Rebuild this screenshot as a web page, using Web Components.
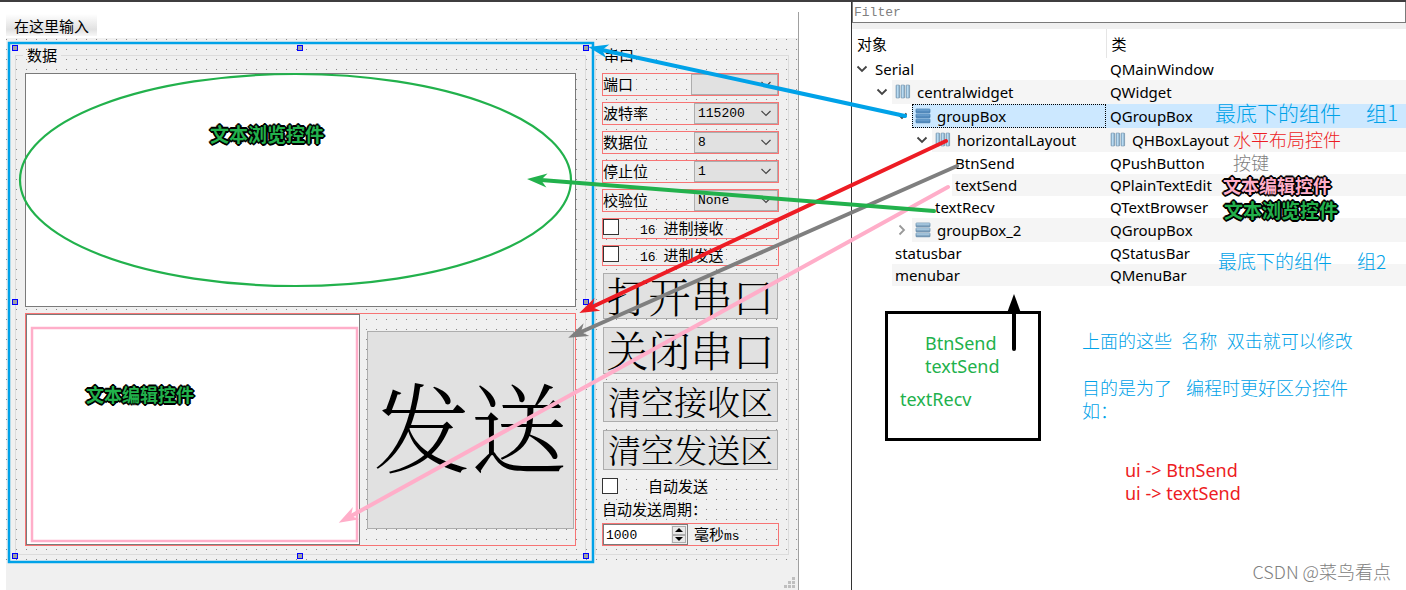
<!DOCTYPE html>
<html lang="zh-CN">
<head>
<meta charset="utf-8">
<title>Serial - Designer</title>
<style>
html, body { margin: 0; }
body { font-family: "Noto Sans", "Noto Sans CJK SC", sans-serif; color: #000; background: #fff; }
</style>
</head>
<body>
<designer-app></designer-app>

<script>
const define = (name, html, setup) => customElements.define(name, class extends HTMLElement {
  constructor() {
    super();
    const t = document.createElement('template');
    t.innerHTML = html;
    this.attachShadow({ mode: 'open' }).append(t.content.cloneNode(true));
  }
  connectedCallback() { if (setup) setup(this, this.shadowRoot); }
});

/* Titled group box */
define('group-panel', `
<style>
:host { display: block; min-width: 0; }
fieldset { box-sizing: border-box; height: 100%; min-width: 0; margin: 0; border: 1px solid #dcdcdc; padding: 10px 9px 8px var(--inset, 9px); }
legend { margin-left: var(--legend-shift, -2px); padding: 0 4px 2px var(--legend-pad, 4px); font-size: 15px; line-height: 13px; }
</style>
<fieldset><legend></legend><slot></slot></fieldset>`,
(el, root) => { root.querySelector('legend').textContent = el.getAttribute('label'); });

/* Label and drop-down in one row */
define('combo-row', `
<style>
:host { display: flex; box-sizing: border-box; height: 23px; border: 1px solid #f77474; font-size: 15px; line-height: 19px; }
label { flex: 1; }
.box { position: relative; width: var(--combo, 84px); }
select { appearance: none; box-sizing: border-box; width: 100%; height: 21px; margin: 0; padding: 1px 0 0 3px; border: 1px solid #adadad; border-radius: 0; background: #e1e1e1; color: #000; font: 13px/18px "Liberation Mono", monospace; display: block; }
svg { position: absolute; right: 7px; top: 7px; pointer-events: none; }
</style>
<label for="s"></label>
<div class="box"><select id="s"><option></option></select>
<svg width="10" height="7" viewBox="0 0 10 7"><path d="M.5 1 5 5.500 9.500 1" fill="none" stroke="#444" stroke-width="1.200"/></svg></div>`,
(el, root) => {
  root.querySelector('label').textContent = el.getAttribute('label');
  root.querySelector('option').textContent = el.getAttribute('value') || '';
});

/* Tick box and caption */
define('check-row', `
<style>
:host { display: flex; box-sizing: border-box; height: 21px; border: 1px solid #f77474; font-size: 15px; line-height: 17px; }
:host([plain]) { border: 0; height: 16px; line-height: 16px; }
input { appearance: none; box-sizing: border-box; flex: none; width: 16px; height: 16px; margin: 0; border: 1px solid #333; background: #fff; }
label { margin-left: var(--gap, 21px); white-space: pre; }
b { font: 13px/13px "Liberation Mono", monospace; }
</style>
<input type="checkbox" id="c"><label for="c"><b></b><span></span></label>`,
(el, root) => {
  root.querySelector('b').textContent = el.getAttribute('prefix') || '';
  root.querySelector('span').textContent = el.getAttribute('label');
});

/* Push button */
define('push-button', `
<style>
:host { display: flex; }
button { flex: 1; box-sizing: border-box; margin: 0; padding: 0 0 var(--lift, 3px); border: 1px solid #adadad; border-radius: 0; background: #e1e1e1; color: #000; overflow: hidden; white-space: nowrap; font: 300 var(--size, 42px)/1 "Noto Serif CJK SC", "Noto Sans CJK SC", serif; }
</style>
<button type="button"><slot></slot></button>`);

/* Number box with steppers and a unit */
define('spin-row', `
<style>
:host { display: flex; box-sizing: border-box; height: 23px; border: 1px solid #f77474; font-size: 15px; line-height: 20px; }
.box { display: flex; box-sizing: border-box; width: 85px; border: 1px solid #7a7a7a; background: #fff; }
input { flex: 1; min-width: 0; margin: 0; padding: 1px 0 0 2px; border: 0; background: none; font: 13px "Liberation Mono", monospace; }
.steps { display: flex; flex-direction: column; padding: 1px; background: #f0f0f0; }
button { display: flex; align-items: center; justify-content: center; flex: 1; box-sizing: border-box; width: 14px; margin: 0; padding: 0; border: 1px solid #adadad; background: #e8e8e8; }
label { margin-left: 6px; }
b { font: 13px/13px "Liberation Mono", monospace; }
</style>
<div class="box"><input id="n" type="text" inputmode="numeric" value="1000">
<div class="steps"><button type="button" aria-label="+"><svg width="8" height="4"><path d="M0 4 4 0 8 4z"/></svg></button><button type="button" aria-label="-"><svg width="8" height="4"><path d="M0 0 4 4 8 0z"/></svg></button></div></div>
<label for="n">毫秒<b>ms</b></label>`);

/* The form being edited */
define('form-window', `
<style>
:host { display: flex; flex-direction: column; min-width: 0; }
.frame { flex: 1; display: flex; flex-direction: column; margin: 10px 52px 0 6px; border-right: 1px solid #a0a0a0; }
.menu { height: 26px; padding-top: 2px; box-sizing: border-box; display: flex; }
.menu a { height: 22px; padding: 0 8px; background: linear-gradient(#fff, #e1e1e1 70%, #f7f7f7); color: #000; text-decoration: none; font: 15px/24px "Noto Sans CJK SC", sans-serif; }
.canvas { flex: none; display: grid; grid-template-columns: 571fr 194fr; gap: 9px; padding: 10px 9px 6px; color: #000;
  background-color: #f0f0f0; background-position: 0 1px;
  background-image: linear-gradient(to right, transparent 1px, #f0f0f0 1px), linear-gradient(#888 1px, transparent 1px); background-size: 10px 10px; font-family: "Noto Sans CJK SC", sans-serif; }
.status { flex: 1; min-height: 27px; background: #f0f0f0; display: flex; align-items: flex-end; justify-content: flex-end; padding: 0 3px 2px; box-sizing: border-box; }
.col { display: flex; flex-direction: column; gap: 6px; }
textarea { display: block; box-sizing: border-box; width: 100%; margin: 0; border: 1px solid #7a7a7a; border-radius: 0; resize: none; background: #fff; }
.recv { height: 234px; }
.row { display: flex; align-items: center; gap: 7px; box-sizing: border-box; height: 233px; padding-right: 1px; border: 1px solid #f77474; }
.row textarea { flex: 333; width: 0; padding: 0; height: 231px; }
.row push-button { flex: 208; min-width: 0; width: 0; height: 198px; --size: 97px; --lift: 12px; }
.buttons { display: flex; flex-direction: column; gap: 8px; padding: 1px 1px 2px; }
.big { height: 46px; }
.big + .big { height: 47px; }
.mid { height: 40px; --size: 33px; }
.wide { --combo: 87px; }
.side { --inset: 6px; --legend-shift: 0px; --legend-pad: 2px; }
.cap { font-size: 15px; line-height: 17px; }
check-row[plain] { --gap: 30px; }
</style>
<div class="frame">
  <div class="menu"><a href="#">在这里输入</a></div>
  <div class="canvas">
    <group-panel label="数据"><div class="col">
      <textarea class="recv" readonly aria-label="textRecv"></textarea>
      <div class="row"><textarea aria-label="textSend"></textarea><push-button>发送</push-button></div>
    </div></group-panel>
    <group-panel class="side" label="串口"><div class="col">
      <combo-row class="wide" label="端口"></combo-row>
      <combo-row label="波特率" value="115200"></combo-row>
      <combo-row label="数据位" value="8"></combo-row>
      <combo-row label="停止位" value="1"></combo-row>
      <combo-row label="校验位" value="None"></combo-row>
      <check-row prefix="16 " label="进制接收"></check-row>
      <check-row prefix="16 " label="进制发送"></check-row>
      <div class="buttons">
        <push-button class="big">打开串口</push-button>
        <push-button class="big">关闭串口</push-button>
        <push-button class="mid">清空接收区</push-button>
        <push-button class="mid">清空发送区</push-button>
      </div>
      <check-row plain label="自动发送"></check-row>
      <div class="cap">自动发送周期：</div>
      <spin-row></spin-row>
    </div></group-panel>
  </div>
  <div class="status"><svg width="11" height="11" fill="#bfbfbf"><path d="M8 0h3v3h-3zM4 4h3v3h-3zM8 4h3v3h-3zM0 8h3v3h-3zM4 8h3v3h-3zM8 8h3v3h-3z"/></svg></div>
</div>`);

/* Object tree: name and class of every widget */
const bars = `<svg class="icon" width="16" height="16" viewBox="0 0 16 16"><defs><linearGradient id="g"><stop stop-color="#7fa6c4"/><stop offset=".5" stop-color="#c5e6fb"/><stop offset="1" stop-color="#5f87a8"/></linearGradient></defs><g fill="url(#g)" stroke="#7593ab" stroke-width=".6"><rect x="1" y="1" width="3.600" height="13" rx=".6"/><rect x="6" y="1" width="3.600" height="13" rx=".6"/><rect x="11" y="1" width="3.600" height="13" rx=".6"/></g></svg>`;
const stack = (id, hi, lo) => `<svg class="icon" width="16" height="16" viewBox="0 0 16 16"><defs><linearGradient id="${id}" x2="0" y2="1"><stop stop-color="${hi}"/><stop offset="1" stop-color="${lo}"/></linearGradient></defs><g fill="url(#${id})" stroke="${lo}" stroke-width=".7"><rect x="1" y="1" width="14" height="3.800" rx=".6"/><rect x="1" y="6" width="14" height="3.800" rx=".6"/><rect x="1" y="11" width="14" height="3.800" rx=".6"/></g></svg>`;
const down = `<svg width="12" height="8" viewBox="0 0 12 8"><path d="M1.500 1.500 6 6 10.500 1.500" fill="none" stroke="#444" stroke-width="1.800"/></svg>`;
const right = `<svg width="8" height="12" viewBox="0 0 8 12"><path d="M1.500 1.500 6 6 1.500 10.500" fill="none" stroke="#999" stroke-width="1.800"/></svg>`;
const objects = [
  [0, down, '', 'Serial', 'QMainWindow'],
  [1, down, bars, 'centralwidget', 'QWidget'],
  [2, down, stack('s1', '#7fb2de', '#3e78ae'), 'groupBox', 'QGroupBox', 'sel'],
  [3, down, bars, 'horizontalLayout', 'QHBoxLayout'],
  [4, '', '', 'BtnSend', 'QPushButton'],
  [4, '', '', 'textSend', 'QPlainTextEdit'],
  [3, '', '', 'textRecv', 'QTextBrowser'],
  [2, right, stack('s2', '#cfeafc', '#5f87a8'), 'groupBox_2', 'QGroupBox'],
  [1, '', '', 'statusbar', 'QStatusBar'],
  [1, '', '', 'menubar', 'QMenuBar']
];
define('object-tree', `
<style>
:host { display: block; font-size: 15px; }
table { width: 100%; table-layout: fixed; border-collapse: collapse; }
th { height: 29px; padding: 2px 5px 0; box-sizing: border-box; text-align: left; font-weight: 400; line-height: 27px; }
th:first-child { width: 254px; border-right: 1px solid #e5e5e5; }
td { padding: 0; height: 22px; line-height: 22px; white-space: nowrap; }
.tall td { height: 24px; line-height: 24px; }
td > div { display: flex; height: 100%; }
.toggle { flex: none; width: 20px; display: flex; align-items: center; justify-content: center; }
.name, .type { flex: 1; display: flex; align-items: center; gap: 6px; padding-left: 3px; box-sizing: border-box; height: 22px; }
.tall .name, .tall .type { height: 24px; }
.type { padding-left: 4px; }
.icon { flex: none; }
tr:nth-child(even) .name, tr:nth-child(even) .type { background: #f5f5f5; }
tr.sel .name, tr.sel .type { background: #cce8ff; }
tr.sel .name { outline: 1px dotted #000; outline-offset: -1px; }
</style>
<table><thead><tr><th scope="col">对象</th><th scope="col">类</th></tr></thead><tbody></tbody></table>`,
(el, root) => {
  root.querySelector('tbody').innerHTML = objects.map(([depth, toggle, icon, name, type, cls]) =>
    `<tr class="${cls || ''} ${icon ? 'tall' : ''}"><td><div style="padding-left:${depth * 20}px"><span class="toggle">${toggle}</span><span class="name">${icon}<span>${name}</span></span></div></td><td><div class="type">${name === 'horizontalLayout' ? icon : ''}<span>${type}</span></div></td></tr>`).join('');
});

/* Inspector column with the explanatory notes below the tree */
define('object-inspector', `
<style>
:host { display: flex; flex-direction: column; min-width: 0; border-left: 1px solid #333; }
input { box-sizing: border-box; width: 100%; height: 21px; margin: 0; padding: 1px 1px 0; border: 1px solid #7a7a7a; border-top: 0; border-radius: 0; background: #fff; font: 13px "Liberation Mono", monospace; }
input::placeholder { color: #808080; opacity: 1; }
.strip { height: 6px; background: #f0f0f0; }
.notes { display: flex; gap: 41px; padding: 25px 16px 0 33px; font-size: 18px; line-height: 23px; }
.box { flex: none; box-sizing: border-box; width: 156px; height: 130px; border: 3px solid #000; padding: 18px 0 0 12px; color: #22b14c; }
.box p { margin: 0 0 10px 25px; }
.box p + p { margin: 0; }
p { margin: 0; }
.blue { color: #00a2e8; padding-top: 19px; white-space: pre; font-weight: 300; }
.blue p + p { margin-top: 24px; }
.red { color: #ed1c24; margin: 36px 0 0 43px; }
</style>
<input type="text" placeholder="Filter" aria-label="Filter">
<div class="strip"></div>
<object-tree></object-tree>
<div class="notes">
  <div class="box"><p>BtnSend<br>textSend</p><p>textRecv</p></div>
  <div><div class="blue"><p>上面的这些  名称  双击就可以修改</p><p>目的是为了   编程时更好区分控件<br>如：</p></div>
  <div class="red">ui -&gt; BtnSend<br>ui -&gt; textSend</div></div>
</div>`);

/* Hand-drawn marks lying over the whole window */
const handles = [[15,48],[300,48],[586,48],[15,302],[586,302],[15,556],[300,556],[586,556]];
const barbed = 'M0 0 20 7 0 14 6 7z', solid = 'M0 0 19 7 0 14z';
const arrows = [['#00a2e8',905,116,602,50,barbed],['#ed1c24',946,141,592,307,barbed],['#7f7f7f',957,166,581,332,barbed],['#ffaec9',948,187,351,516,barbed],['#22b14c',934,211,541,180,barbed],['#000',1014,349,1014,307,solid]];
define('mark-layer', `
<style>
:host { position: absolute; inset: 0; pointer-events: none; overflow: hidden; font-weight: 300; }
svg { position: absolute; left: 0; top: 0; width: 100%; height: 590px; }
.note { position: absolute; display: flex; gap: 25px; white-space: nowrap; font-size: 18px; line-height: 24px; font-family: "Noto Sans CJK SC", sans-serif; }
.m { font-size: 19px; } .l { font-size: 21px; }
.blue { color: #00a2e8; } .red { color: #ed1c24; } .grey { color: #7f7f7f; }
.green { color: #22b14c; } .pink { color: #ffaec9; }
.out { font-weight: 700; text-shadow: 2px 0 #000, -2px 0 #000, 0 2px #000, 0 -2px #000, 1px 1px #000, -1px 1px #000, 1px -1px #000, -1px -1px #000; }
.mark { position: absolute; right: 15px; bottom: 6px; font: 300 18px/26px "Noto Sans CJK SC", sans-serif; color: #808080; }
</style>
<svg viewBox="0 0 1406 590" preserveAspectRatio="none">
  <g fill="#a0a0a4" stroke="#00f">${handles.map(([x, y]) => `<rect x="${x - 2.5}" y="${y - 2.5}" width="5" height="5"/>`).join('')}</g>
  <g fill="none">
    <rect x="9" y="43" width="584" height="519" stroke="#00a2e8" stroke-width="2.500"/>
    <rect x="32" y="328" width="325" height="213" stroke="#ffaec9" stroke-width="2.500"/>
    <ellipse cx="295.500" cy="180" rx="275.500" ry="106" stroke="#22b14c" stroke-width="2.200"/>
  </g>
  ${arrows.map(([c, x1, y1, x2, y2, d], i) => `<marker id="a${i}" markerUnits="userSpaceOnUse" markerWidth="24" markerHeight="16" refX="6" refY="7" orient="auto" overflow="visible"><path d="${d}" fill="${c}"/></marker><path d="M${x1} ${y1}L${x2} ${y2}" stroke="${c}" stroke-width="4" stroke-linecap="round" marker-end="url(#a${i})"/>`).join('')}
</svg>
<div class="note m green out" style="left:210px;top:122px">文本浏览控件</div>
<div class="note green out" style="left:86px;top:382px">文本编辑控件</div>
<div class="note l blue" style="left:1215px;top:100px"><span>最底下的组件</span><span>组1</span></div>
<div class="note red" style="left:1233px;top:127px">水平布局控件</div>
<div class="note grey" style="left:1233px;top:150px">按键</div>
<div class="note pink out" style="left:1223px;top:173px">文本编辑控件</div>
<div class="note m green out" style="left:1224px;top:198px">文本浏览控件</div>
<div class="note m blue" style="left:1218px;top:249px"><span>最底下的组件</span><span>组2</span></div>
<div class="mark">CSDN @菜鸟看点</div>`);

define('designer-app', `
<style>
:host { position: relative; display: grid; grid-template-columns: 851fr 555fr; box-sizing: border-box; min-height: 100vh; border-top: 2px solid #3f3d3f; }
mark-layer { top: -2px; }
</style>
<form-window></form-window>
<object-inspector></object-inspector>
<mark-layer></mark-layer>`);
</script>
</body>
</html>
